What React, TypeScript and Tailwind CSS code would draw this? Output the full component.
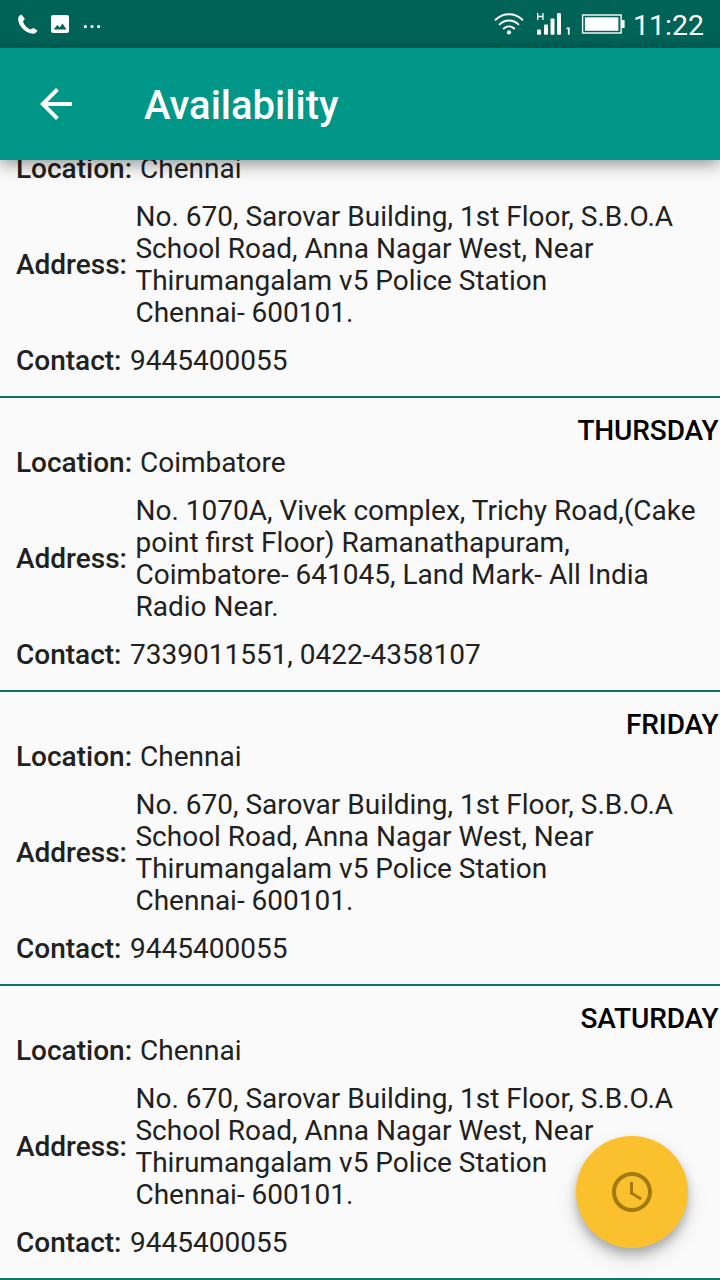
interface Slot {
  day?: string;
  location: string;
  address: string;
  contact: string;
}

const CHENNAI = {
  location: 'Chennai',
  address:
    'No. 670, Sarovar Building, 1st Floor, S.B.O.A\nSchool Road, Anna Nagar West, Near\nThirumangalam v5 Police Station\nChennai- 600101.',
  contact: '9445400055',
};

const COIMBATORE = {
  location: 'Coimbatore',
  address:
    'No. 1070A, Vivek complex, Trichy Road,(Cake\npoint first Floor) Ramanathapuram,\nCoimbatore- 641045, Land Mark- All India\nRadio Near.',
  contact: '7339011551, 0422-4358107',
};

const SLOTS: Slot[] = [
  { ...CHENNAI },
  { day: 'THURSDAY', ...COIMBATORE },
  { day: 'FRIDAY', ...CHENNAI },
  { day: 'SATURDAY', ...CHENNAI },
];

function StatusBar() {
  return (
    <div className="flex h-12 shrink-0 items-center bg-[#006358] text-white">
      <svg className="ml-4 h-6 w-6" viewBox="0 0 24 24" fill="currentColor">
        <path d="M5.4 2.4C3.6 3.1 2 4.6 2.1 7 2.6 14.5 9.5 21.3 17 21.8c2 0 3.8-1.3 4.6-3.2l-4.1-2.6-3.3 1.6C10.6 15.6 8.2 13 7 9.4l1.9-2.7-3.5-4.3z" />
      </svg>
      <svg className="ml-2 h-6 w-6" viewBox="0 0 24 24" fill="currentColor">
        <path
          fillRule="evenodd"
          d="M5 3h14a2 2 0 0 1 2 2v14a2 2 0 0 1-2 2H5a2 2 0 0 1-2-2V5a2 2 0 0 1 2-2zm.7 14.4h12.8L14.5 11.6l-2.7 4-2.6-2.7z"
        />
      </svg>
      <svg className="ml-[11px] h-6 w-[18px]" viewBox="0 0 18 24" fill="currentColor">
        <circle cx="2.4" cy="14.6" r="1.6" />
        <circle cx="9" cy="14.6" r="1.6" />
        <circle cx="15.6" cy="14.6" r="1.6" />
      </svg>

      {/* Wifi */}
      <svg
        className="ml-auto h-6 w-[30px]"
        viewBox="0 0 30 24"
        fill="none"
        stroke="currentColor"
        strokeWidth="1.9"
        strokeLinecap="round"
      >
        <path d="M1.6 7.8C9.2.4 20.8.4 28.4 7.8" />
        <path d="M5.6 12.4c5.4-5.2 13.4-5.2 18.8 0" />
        <path d="M9.8 16.5c3-2.9 7.4-2.9 10.4 0" />
        <circle cx="15" cy="20.4" r="2.1" fill="currentColor" stroke="none" />
      </svg>

      {/* Mobile signal */}
      <svg className="ml-3 h-6 w-[36px]" viewBox="0 0 36 24" fill="currentColor">
        <path d="M1.7 1v7M7 1v7M1.7 4.5H7" stroke="currentColor" strokeWidth="1.3" />
        <rect x="1" y="17.5" width="4" height="5.3" rx="1" />
        <rect x="8" y="12.5" width="4" height="10.3" rx="1" />
        <rect x="14.5" y="6.5" width="4" height="16.3" rx="1" />
        <rect x="21" y="1" width="4" height="21.8" rx="1" />
        <path d="M30.6 16.4h2.2v6.4" fill="none" stroke="currentColor" strokeWidth="1.8" />
      </svg>

      {/* Battery */}
      <svg className="ml-[9px] h-6 w-[44px]" viewBox="0 0 44 24" fill="currentColor">
        <rect x="1.6" y="3" width="38.5" height="18" fill="none" stroke="currentColor" strokeWidth="1.4" />
        <rect x="3.9" y="5.3" width="33.5" height="13.5" />
        <rect x="40.6" y="8" width="3" height="8" />
      </svg>
      <span className="mr-4 ml-2 mt-[3px] text-[28.5px] leading-8">11:22</span>
    </div>
  );
}

function SlotCard({ slot }: { slot: Slot }) {
  return (
    <div className="border-b-2 border-[#11765f] pt-[17px] pb-[19px]">
      {slot.day && (
        <div className="pr-[1.5px] text-right font-medium tracking-[-0.1px] text-black">{slot.day}</div>
      )}
      <div className="flex gap-2 px-4">
        <span className="font-medium">Location:</span>
        <span>{slot.location}</span>
      </div>
      <div className="flex items-center gap-[8.5px] py-4 pl-4">
        <span className="font-medium">Address:</span>
        <span className="whitespace-pre">{slot.address}</span>
      </div>
      <div className="flex gap-[8.5px] px-4">
        <span className="font-medium">Contact:</span>
        <span>{slot.contact}</span>
      </div>
    </div>
  );
}

export default function App() {
  return (
    <div className="relative flex h-[1280px] w-[720px] flex-col overflow-hidden bg-[#fafafa] font-['Roboto',sans-serif] text-[28px] leading-8 text-[#212121]">
      <StatusBar />
      <header className="z-10 flex h-28 shrink-0 items-center bg-[#009688] text-white shadow-[0_4px_16px_rgba(0,0,0,0.42)]">
        <svg className="ml-8 h-12 w-12" viewBox="0 0 24 24" fill="currentColor">
          <path d="M20 11H7.83l5.59-5.59L12 4l-8 8 8 8 1.41-1.41L7.83 13H20v-2z" />
        </svg>
        <h1 className="mt-[3px] ml-16 text-[40px] leading-[48px] font-medium">Availability</h1>
      </header>

      <main className="min-h-0 flex-1 overflow-hidden">
        {/* List is scrolled part way through the first card */}
        <div className="-mt-6">
          {SLOTS.map((slot, i) => (
            <SlotCard key={i} slot={slot} />
          ))}
        </div>
      </main>

      <button className="absolute right-8 bottom-8 flex h-28 w-28 items-center justify-center rounded-full bg-[#fbc02d] text-[#a27a12] shadow-[0_6px_10px_rgba(0,0,0,0.22),0_10px_20px_rgba(0,0,0,0.15)]">
        <svg className="h-12 w-12" viewBox="0 0 24 24" fill="currentColor">
          <path d="M11.99 2C6.47 2 2 6.48 2 12s4.47 10 9.99 10C17.52 22 22 17.52 22 12S17.52 2 11.99 2zM12 20c-4.42 0-8-3.58-8-8s3.58-8 8-8 8 3.58 8 8-3.58 8-8 8z" />
          <path d="M12.5 7H11v6l5.25 3.15.75-1.23-4.5-2.67z" />
        </svg>
      </button>
    </div>
  );
}
